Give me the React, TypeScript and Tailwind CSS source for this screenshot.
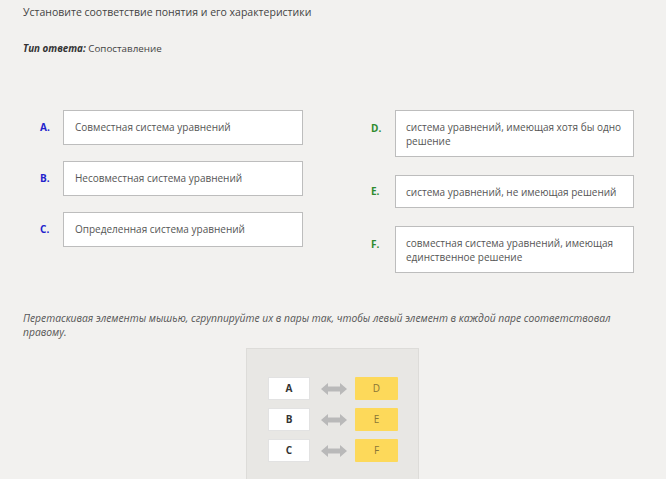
// Matching task: concepts on the left, characteristics on the right, drag area below

const leftItems = [
    { key: "A", text: "Совместная система уравнений" },
    { key: "B", text: "Несовместная система уравнений" },
    { key: "C", text: "Определенная система уравнений" },
];

const rightItems = [
    { key: "D", text: ["система уравнений, имеющая хотя бы одно", "решение"] },
    { key: "E", text: ["система уравнений, не имеющая решений"] },
    { key: "F", text: ["совместная система уравнений, имеющая", "единственное решение"] },
];

const pairs = [
    ["A", "D"],
    ["B", "E"],
    ["C", "F"],
];

const DoubleArrow = () => (
    <svg width="26" height="14" viewBox="0 0 26 14" className="block">
        <polygon points="0,7 7,1 7,4.5 19,4.5 19,1 26,7 19,13 19,9.5 7,9.5 7,13" fill="#b9b9b9" />
    </svg>
);

const App = () => {
    return (
        <div className="w-[666px] h-[479px] overflow-hidden bg-[#f2f1ef] text-[#3c3c3c] font-['Open_Sans',sans-serif]">

            {/* Question */}
            <div className="pl-[23px] pt-[4px] text-[10.5px] leading-[16px] text-[#444]">
                Установите соответствие понятия и его характеристики
            </div>

            <div className="pl-[23px] mt-[22px] text-[9.8px] leading-[14px] text-[#444]">
                <span className="font-bold italic text-[#333]">Тип ответа:</span> Сопоставление
            </div>

            {/* Columns */}
            <div className="flex flex-row mt-[54px]">
                <div className="flex flex-col w-[303px] pl-[40px] gap-[16px]">
                    {leftItems.map(item => (
                        <div key={item.key} className="flex flex-row items-center">
                            <div className="w-[23px] text-[10px] font-bold text-[#2222cc]">{item.key}.</div>
                            <div className="w-[240px] h-[35px] flex items-center bg-white border border-[#bdbdbd] pl-[11px] text-[10px] text-[#555]">
                                {item.text}
                            </div>
                        </div>
                    ))}
                </div>

                <div className="flex flex-col ml-[68px] gap-[18px]">
                    {rightItems.map(item => (
                        <div key={item.key} className="flex flex-row items-start">
                            <div className={"w-[24px] text-[10px] font-bold text-[#2e8b2e] " + (item.text.length > 1 ? "pt-[11px]" : "pt-[9px]")}>{item.key}.</div>
                            <div className={"w-[239px] flex flex-col justify-center bg-white border border-[#bdbdbd] pl-[10px] text-[10px] leading-[14px] text-[#555] " + (item.text.length > 1 ? "h-[47px]" : "h-[33px]")}>
                                {item.text.map((line, i) => (
                                    <div key={i}>{line}</div>
                                ))}
                            </div>
                        </div>
                    ))}
                </div>
            </div>

            {/* Instruction */}
            <div className="pl-[23px] w-[640px] mt-[38px] text-[10.3px] leading-[14px] italic text-[#555]">
                Перетаскивая элементы мышью, сгруппируйте их в пары так, чтобы левый элемент в каждой паре соответствовал правому.
            </div>

            {/* Drag area */}
            <div className="ml-[246px] mt-[9px] w-[173px] h-[160px] bg-[#e8e7e4] border border-[#dddcd9] pt-[28px] pl-[21px]">
                <div className="flex flex-col gap-[8px]">
                    {pairs.map(([l, r]) => (
                        <div key={l} className="flex flex-row items-center">
                            <div className="w-[42px] h-[23px] flex items-center justify-center bg-white border border-[#e2e2e2] text-[10px] font-bold text-[#333]">{l}</div>
                            <div className="ml-[11px] w-[26px]"><DoubleArrow /></div>
                            <div className="ml-[8px] w-[43px] h-[23px] flex items-center justify-center bg-[#fdd95a] rounded-[1px] text-[10px] text-[#8a7636]">{r}</div>
                        </div>
                    ))}
                </div>
            </div>

        </div>
    );
};

export default App;
